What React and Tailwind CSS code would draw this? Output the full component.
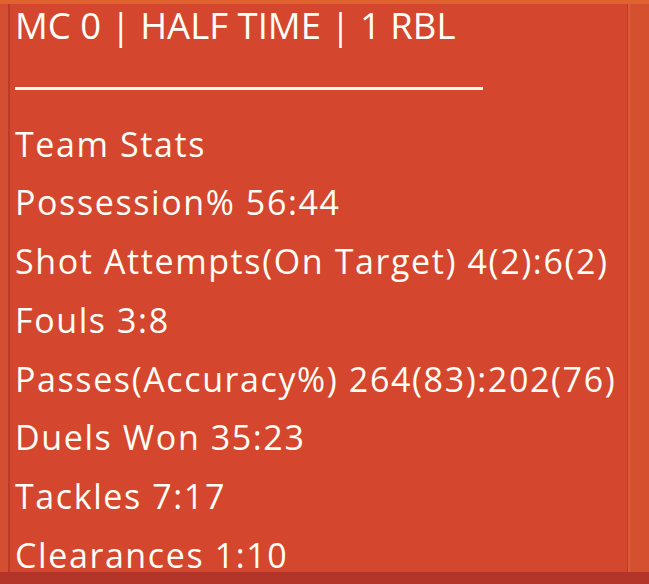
export default function App() {
  const rows = [
    "Team Stats",
    "Possession% 56:44",
    "Shot Attempts(On Target) 4(2):6(2)",
    "Fouls 3:8",
    "Passes(Accuracy%) 264(83):202(76)",
    "Duels Won 35:23",
    "Tackles 7:17",
    "Clearances 1:10",
  ];
  return (
    <div className="w-[649px] h-[584px] flex flex-col bg-[#d4462d] overflow-hidden" style={{ fontFamily: '"Open Sans", "Noto Sans", sans-serif' }}>
      <div className="h-[4px] shrink-0 bg-[#e0632f]" />
      <div className="flex-1 min-h-0 flex flex-row">
        <div className="w-[8px] shrink-0 bg-[#d44e31]" />
        <div className="w-[2px] shrink-0 bg-[#b63c2c]" />
        <div className="flex-1 min-w-0 flex flex-col text-[#fffdf6] pl-[5px]">
          <div className="pt-[3px] text-[36.5px] leading-[36.5px] whitespace-nowrap">MC 0 | HALF TIME | 1 RBL</div>
          <div className="mt-[43.5px] h-[3px] w-[468px] bg-[#fff8ee] shrink-0" />
          <div className="mt-[36.8px] flex flex-col gap-[24.7px]">
            {rows.map((r) => (
              <div key={r} className="text-[34px] leading-[34px] tracking-[1.6px] whitespace-nowrap">{r}</div>
            ))}
          </div>
        </div>
        <div className="w-[1px] shrink-0 bg-[#b5402e]" />
        <div className="w-[2px] shrink-0 bg-[#da5a3a]" />
        <div className="w-[19px] shrink-0 bg-[#d5502f]" />
      </div>
      <div className="h-[12px] shrink-0 bg-[#b3352a]" />
    </div>
  );
}
